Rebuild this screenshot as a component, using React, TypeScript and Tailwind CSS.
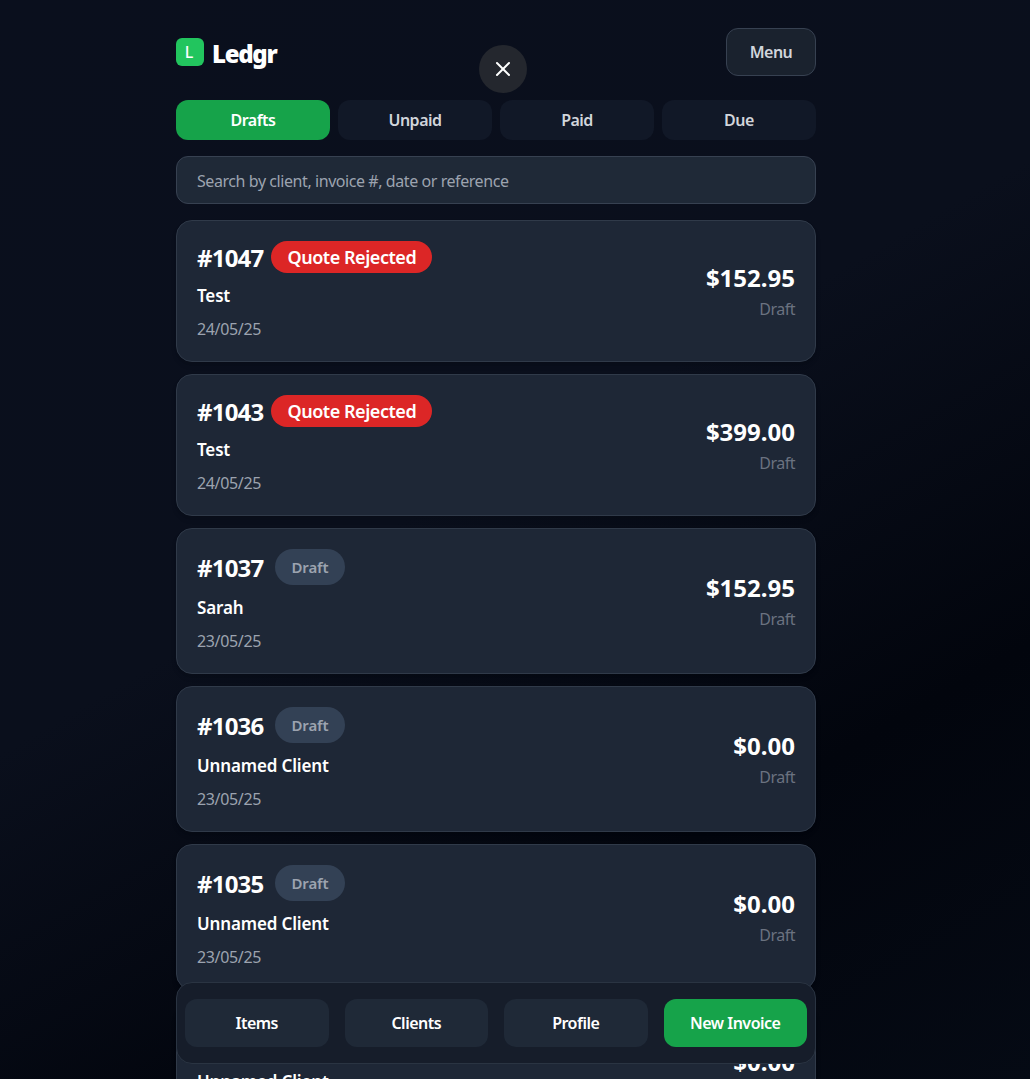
import { X } from 'lucide-react'

interface Invoice {
  id: string
  client: string
  date: string
  amount: string
  rejected?: boolean
}

const invoices: Invoice[] = [
  { id: '#1047', client: 'Test', date: '24/05/25', amount: '$152.95', rejected: true },
  { id: '#1043', client: 'Test', date: '24/05/25', amount: '$399.00', rejected: true },
  { id: '#1037', client: 'Sarah', date: '23/05/25', amount: '$152.95' },
  { id: '#1036', client: 'Unnamed Client', date: '23/05/25', amount: '$0.00' },
  { id: '#1035', client: 'Unnamed Client', date: '23/05/25', amount: '$0.00' },
  { id: '#1034', client: 'Unnamed Client', date: '23/05/25', amount: '$0.00' },
]

const tabs = ['Drafts', 'Unpaid', 'Paid', 'Due']
const navItems = ['Items', 'Clients', 'Profile']

function InvoiceCard({ invoice }: { invoice: Invoice }) {
  return (
    <div className="flex items-center justify-between rounded-2xl border border-[#303a49] bg-[#1e2736] px-5 py-5 shadow-md">
      <div className="flex flex-col">
        <div className="flex items-center">
          <span className="pt-[2px] text-[24px] leading-[30px] font-bold tracking-[-0.8px] text-white">{invoice.id}</span>
          {invoice.rejected ? (
            <span className="ml-2 flex h-8 items-center rounded-full bg-[#dc2626] px-4 text-[18px] font-semibold tracking-[-0.45px] text-white">
              Quote Rejected
            </span>
          ) : (
            <span className="ml-3 flex h-9 items-center rounded-full bg-[#334155] px-4 text-[15px] font-semibold tracking-[-0.1px] text-[#9ca3af]">
              Draft
            </span>
          )}
        </div>
        <div className="mt-[11px] text-[17px] leading-6 font-semibold tracking-[-0.15px] text-white">
          {invoice.client}
        </div>
        <div className="mt-[10px] mb-[1px] text-[16px] leading-[22px] tracking-[-0.35px] text-[#9ca3af]">{invoice.date}</div>
      </div>
      <div className="flex flex-col items-end pb-[2px]">
        <div className="text-[24px] leading-8 font-bold text-white">{invoice.amount}</div>
        <div className="mt-[5px] text-[16px] leading-5 tracking-[-0.5px] text-[#6b7280]">Draft</div>
      </div>
    </div>
  )
}

export default function App() {
  return (
    <div className="relative h-[1079px] w-full overflow-hidden bg-[linear-gradient(150deg,#0a0f1d_0%,#0a0f1c_45%,#02050d_74%,#050a14_100%)] font-['Noto_Sans','Open_Sans',sans-serif]">
      <div className="ml-[176px] w-[640px] pt-7">
        {/* Header */}
        <header className="flex h-12 items-center justify-between">
          <div className="flex items-center gap-2">
            <div className="flex h-7 w-7 items-center justify-center rounded-md bg-[#22c55e] pr-[2px] text-[16px] font-medium text-white">
              L
            </div>
            <span className="mt-1 text-[24px] leading-8 font-black tracking-[-1.3px] text-white">Ledgr</span>
          </div>
          <button className="h-12 w-[90px] rounded-xl border border-[#374151] bg-[#1a222e] text-[16px] font-semibold tracking-[-0.5px] text-[#d1d5db]">
            Menu
          </button>
        </header>

        {/* Tabs */}
        <div className="mt-6 grid grid-cols-4 gap-2">
          {tabs.map((tab, i) => (
            <button
              key={tab}
              className={
                i === 0
                  ? 'h-10 rounded-xl bg-[#16a34a] text-[16px] font-semibold tracking-[-0.5px] text-white'
                  : 'h-10 rounded-xl bg-[#111827] text-[16px] font-semibold tracking-[-0.5px] text-[#d1d5db]'
              }
            >
              {tab}
            </button>
          ))}
        </div>

        {/* Search */}
        <div className="mt-4 flex h-12 items-center rounded-xl border border-[#374151] bg-[#1f2937] px-5 pt-[2px] text-[16px] tracking-[-0.43px] text-[#9ca3af]">
          Search by client, invoice #, date or reference
        </div>

        {/* Invoices */}
        <div className="mt-4 flex flex-col gap-3">
          {invoices.map((invoice) => (
            <InvoiceCard key={invoice.id} invoice={invoice} />
          ))}
        </div>
      </div>

      {/* Close button overlay */}
      <button className="absolute top-[45px] left-[479px] flex h-12 w-12 items-center justify-center rounded-full bg-[#24272e] text-white">
        <X size={24} strokeWidth={2} />
      </button>

      {/* Bottom nav overlay */}
      <nav className="absolute top-[982px] left-[176px] grid h-[82px] w-[640px] grid-cols-4 items-center gap-4 rounded-2xl border border-[#2a3442] bg-[#161d2a] px-2">
        {navItems.map((item) => (
          <button key={item} className="h-12 rounded-xl bg-[#1f2937] text-[16px] font-semibold tracking-[-0.5px] text-white">
            {item}
          </button>
        ))}
        <button className="h-12 rounded-xl bg-[#16a34a] text-[16px] font-semibold tracking-[-0.5px] text-white">New Invoice</button>
      </nav>
    </div>
  )
}
